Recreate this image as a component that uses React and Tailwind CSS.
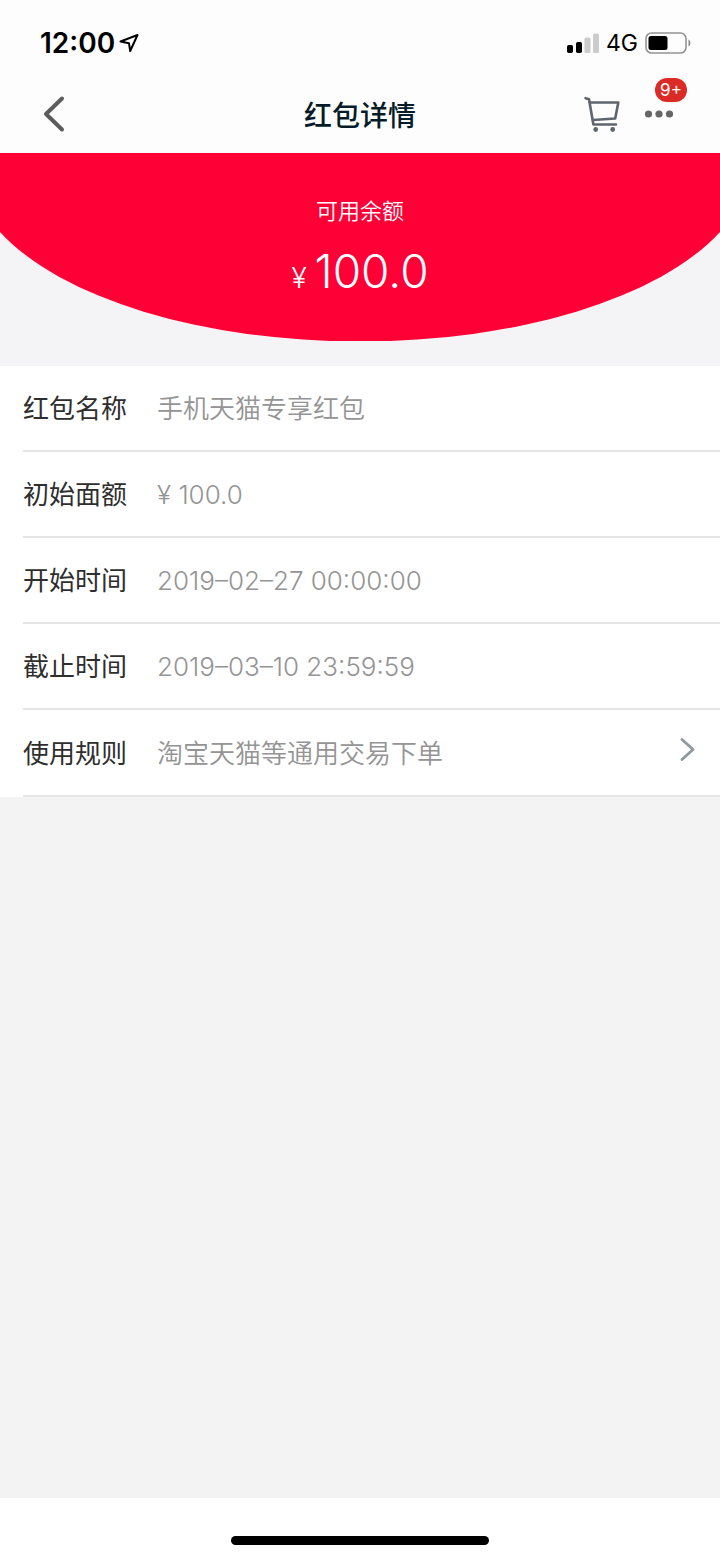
const details = [
  { label: '红包名称', value: '手机天猫专享红包' },
  { label: '初始面额', value: '¥ 100.0' },
  { label: '开始时间', value: '2019–02–27 00:00:00' },
  { label: '截止时间', value: '2019–03–10 23:59:59' },
];

function StatusBar() {
  return (
    <div className="flex h-[78px] items-center justify-between pt-2 pr-[29px] pl-10 text-black">
      <div className="flex items-center gap-1">
        <span className="text-[28px] leading-8 font-semibold">12:00</span>
        <svg className="h-5 w-5" viewBox="0 0 20 20" fill="none" stroke="currentColor" strokeWidth="2" strokeLinejoin="round">
          <path d="M18.5 2 1.5 8.5l8.5 1.8 1.2 7.7z" />
        </svg>
      </div>
      <div className="flex items-center gap-[7px]">
        <svg className="h-5 w-8" viewBox="0 0 32 20" fill="#000">
          <rect x="0" y="12" width="6" height="8" rx="1.8" />
          <rect x="9" y="9" width="6" height="11" rx="1.8" />
          <rect x="17.5" y="4.5" width="6" height="15.5" rx="1.5" fill="#ccc" />
          <rect x="26" y="0.5" width="6" height="19.5" rx="1.5" fill="#ccc" />
        </svg>
        <span className="text-[23px] leading-8">4G</span>
        <svg className="h-[22px] w-[46px]" viewBox="0 0 46 22" fill="none">
          <rect x="1" y="1" width="40" height="20" rx="5.5" stroke="#949494" strokeWidth="1.6" />
          <rect x="3.5" y="4" width="19" height="14" rx="2.5" fill="#000" />
          <path d="M43.5 7.5c2.5 1 2.5 6 0 7z" fill="#888" />
        </svg>
      </div>
    </div>
  );
}

function NavBar() {
  return (
    <header className="grid h-[75px] grid-cols-3 items-center px-9 pb-1">
      <button type="button" aria-label="返回" className="justify-self-start">
        <svg className="h-10 w-8" viewBox="0 0 32 40" fill="none" stroke="#5c5c5c" strokeWidth="4" strokeLinecap="round" strokeLinejoin="round">
          <path d="M26 4.5 10 20l16 15.5" />
        </svg>
      </button>
      <h1 className="pt-1 text-center text-[28px] leading-10 font-medium text-[#051b28]">红包详情</h1>
      <div className="flex items-center gap-6 justify-self-end">
        <button type="button" aria-label="购物车">
          <svg className="h-9 w-9" viewBox="0 0 36 36" fill="none" stroke="#5f646e" strokeWidth="2.6" strokeLinecap="round" strokeLinejoin="round">
            <path d="M1.6 2.2 5 3.2 9.4 28.5H32" />
            <path d="M5.8 6.5H34.3L31.2 22.5 8.8 24" />
            <circle cx="11.7" cy="33.5" r="2.4" fill="#5f646e" stroke="none" />
            <circle cx="28.7" cy="33.5" r="2.4" fill="#5f646e" stroke="none" />
          </svg>
        </button>
        <button type="button" aria-label="更多" className="relative flex h-9 w-10 items-center">
          <svg className="h-2 w-[30px]" viewBox="0 0 30 8" fill="#666">
            <circle cx="4.5" cy="4" r="3.6" />
            <circle cx="15" cy="4" r="3.6" />
            <circle cx="25.5" cy="4" r="3.6" />
          </svg>
          <span className="absolute -top-[18px] left-[11px] flex h-6 w-8 items-center justify-center rounded-full bg-[#dc2a26] text-[17px] leading-6 text-white">
            9+
          </span>
        </button>
      </div>
    </header>
  );
}

function Balance() {
  return (
    <section className="relative h-[213px] bg-[#f4f3f5] pt-10 text-center text-white">
      <svg className="absolute inset-x-0 top-0 h-[188px] w-full" viewBox="0 0 720 188" preserveAspectRatio="none">
        <path d="M0 0H720V79A390 178 0 0 1 0 79z" fill="#ff0036" />
      </svg>
      <div className="relative">
        <p className="text-[22px] leading-9 font-[350]">可用余额</p>
        <p className="mt-3 flex items-baseline justify-center gap-2 leading-[60px]">
          <span className="text-[28px] font-[350]">¥</span>
          <span className="text-[46px] font-[350]">100.0</span>
        </p>
      </div>
    </section>
  );
}

export default function App() {
  return (
    <div className="flex min-h-screen flex-col bg-[#f3f3f3] font-[Inter,'Noto_Sans_CJK_SC',sans-serif]">
      <div className="bg-[#fdfdfd]">
        <StatusBar />
        <NavBar />
      </div>

      <main className="grow">
        <Balance />
        <dl className="bg-white pl-[23px] text-[26px] leading-9">
          {details.map((item) => (
            <div key={item.label} className="flex h-[86px] items-center gap-[30px] border-b-2 border-[#e6e6e6] pt-0.5">
              <dt className="text-[#2e2e2e]">{item.label}</dt>
              <dd className="font-[350] text-[#949494]">{item.value}</dd>
            </div>
          ))}
          <div className="flex h-[87px] items-center gap-[30px] border-b-2 border-[#e6e6e6] pt-0.5 pr-6">
            <dt className="text-[#2e2e2e]">使用规则</dt>
            <dd className="flex grow items-center justify-between font-[350] text-[#949494]">
              淘宝天猫等通用交易下单
              <button type="button" aria-label="查看使用规则">
                <svg className="h-8 w-4" viewBox="0 0 16 32" fill="none" stroke="#8d999d" strokeWidth="2.8" strokeLinecap="round" strokeLinejoin="round">
                  <path d="M2 1.5 13 11.5 2 21.5" />
                </svg>
              </button>
            </dd>
          </div>
        </dl>
      </main>

      <footer className="flex h-[60px] items-center justify-center bg-white pt-6">
        <div className="h-[9px] w-[258px] rounded-full bg-black" />
      </footer>
    </div>
  );
}
